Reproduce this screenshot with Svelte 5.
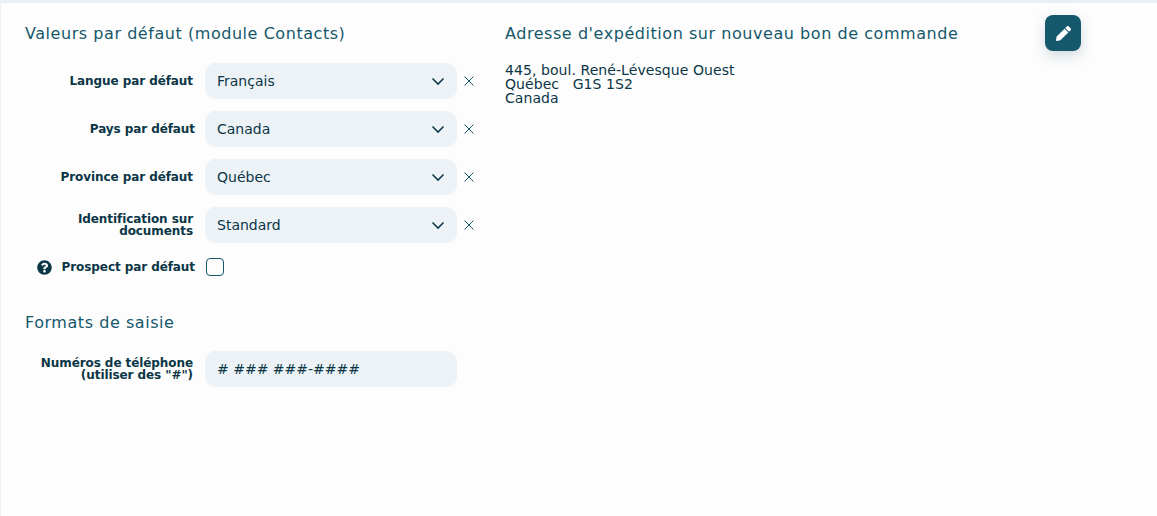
<script>
  const rows = [
    { label: ['Langue par défaut'], value: 'Français', shift: false },
    { label: ['Pays par défaut'], value: 'Canada', shift: true },
    { label: ['Province par défaut'], value: 'Québec', shift: false },
    { label: ['Identification sur', 'documents'], value: 'Standard', shift: false }
  ];
</script>

<div class="page">
  <section class="left">
    <h2>Valeurs par défaut (module Contacts)</h2>
    <div class="rows">
      {#each rows as r}
        <div class="row">
          <div class="label" class:shift={r.shift}>
            {#each r.label as l}<span>{l}</span>{/each}
          </div>
          <div class="select">
            <span>{r.value}</span>
            <svg class="chev" width="14" height="9" viewBox="0 0 14 9"><path d="M1.5 1.5 7 7l5.5-5.500" fill="none" stroke="#0f3d4f" stroke-width="1.6"/></svg>
          </div>
          <svg class="clear" width="12" height="12" viewBox="0 0 12 12"><path d="M1.500 1.500l9 9M10.500 1.500l-9 9" fill="none" stroke="#15586b" stroke-width="1"/></svg>
        </div>
      {/each}
      <div class="row check">
        <div class="label shift">
          <span class="help">
            <svg width="15" height="15" viewBox="0 0 512 512"><path fill="#0b3646" d="M504 256c0 137-111 248-248 248S8 393 8 256 119 8 256 8s248 111 248 248zM262.700 90c-54.500 0-89.300 23-116.500 63.800-3.500 5.300-2.300 12.400 2.800 16.300l34.700 26.300c5.200 3.900 12.600 3 16.700-2.100 17.900-22.700 30.100-35.800 57.300-35.800 20.400 0 45.700 13.100 45.700 33 0 15-12.400 22.700-32.600 34-23.600 13.200-54.800 29.700-54.800 70.900V300c0 6.600 5.400 12 12 12h56c6.600 0 12-5.400 12-12v-1.300c0-28.500 83.400-29.700 83.400-106.900C379.400 133.600 319.100 90 262.700 90zM256 338c-25.400 0-46 20.600-46 46 0 25.400 20.600 46 46 46s46-20.600 46-46c0-25.400-20.600-46-46-46z"/></svg>
          </span>
          <span>Prospect par défaut</span>
        </div>
        <input type="checkbox" class="box" />
      </div>
    </div>

    <h2 class="second">Formats de saisie</h2>
    <div class="row">
      <div class="label"><span>Numéros de téléphone</span><span>(utiliser des "#")</span></div>
      <div class="select phone"><span># ### ###-####</span></div>
    </div>
  </section>

  <section class="right">
    <h2>Adresse d'expédition sur nouveau bon de commande</h2>
    <address>
      <div>445, boul. René-Lévesque Ouest</div>
      <div>Québec &nbsp; G1S 1S2</div>
      <div>Canada</div>
    </address>
    <button class="edit" aria-label="Modifier">
      <svg width="15" height="15" viewBox="0 0 512 512"><path fill="#fff" d="M497.900 142.100l-46.100 46.100c-4.700 4.700-12.300 4.700-17 0l-111-111c-4.700-4.700-4.700-12.300 0-17l46.100-46.100c18.700-18.700 49.100-18.700 67.900 0l60.100 60.100c18.800 18.700 18.800 49.100 0 67.900zM284.200 99.800L21.600 362.400.4 483.900c-2.900 16.400 11.400 30.600 27.800 27.800l121.500-21.300 262.600-262.600c4.700-4.700 4.700-12.300 0-17l-111-111c-4.800-4.700-12.400-4.700-17.100 0z"/></svg>
    </button>
  </section>
</div>

<style>
  :global(body) {
    margin: 0;
    background: #fdfdfd;
  }
  .page {
    height: 513px;
    border-top: 3px solid #eaf0f6;
    border-left: 1px solid #eaf0f6;
    display: flex;
    font-family: "DejaVu Sans", Verdana, sans-serif;
    color: #0b3646;
    overflow: hidden;
  }
  .left {
    width: 480px;
    padding: 21px 0 0 24px;
    box-sizing: border-box;
  }
  .right {
    position: relative;
    width: 600px;
    padding: 21px 0 0 24px;
    box-sizing: border-box;
  }
  h2 {
    margin: 0;
    font-size: 16px;
    line-height: 19px;
    font-weight: 400;
    letter-spacing: 0.55px;
    color: #15586b;
  }
  .rows {
    margin-top: 20px;
    display: flex;
    flex-direction: column;
    gap: 12px;
  }
  .row {
    display: flex;
    align-items: center;
  }
  .row.check {
    height: 24px;
  }
  .label {
    width: 168px;
    flex: none;
    display: flex;
    flex-direction: column;
    align-items: flex-end;
    font-size: 12px;
    line-height: 12px;
    font-weight: 700;
    letter-spacing: -0.08px;
    text-align: right;
  }
  .label.shift {
    width: 170px;
    margin-right: -2px;
  }
  .check .label {
    flex-direction: row;
    justify-content: flex-end;
    align-items: center;
    gap: 10px;
  }
  .help {
    display: flex;
  }
  .select {
    margin-left: 12px;
    width: 252px;
    height: 36px;
    flex: none;
    box-sizing: border-box;
    padding: 0 12px;
    border-radius: 10px;
    background: #edf2f7;
    display: flex;
    align-items: center;
    justify-content: space-between;
    font-size: 14px;
    color: #0b3646;
  }
  .clear {
    margin-left: 6px;
  }
  .box {
    appearance: none;
    margin: 0 0 0 13px;
    width: 18px;
    height: 18px;
    box-sizing: border-box;
    border: 1.5px solid #15586b;
    border-radius: 4px;
    background: #fdfdfd;
  }
  .second {
    margin-top: 34px;
    margin-bottom: 19px;
  }
  address {
    margin-top: 20px;
    font-style: normal;
    font-size: 14px;
    line-height: 14px;
    letter-spacing: 0.07px;
  }
  .edit {
    position: absolute;
    left: 564px;
    top: 12px;
    width: 36px;
    height: 36px;
    padding: 0;
    border: 0;
    border-radius: 8px;
    background: #15586b;
    box-shadow: 0 5px 14px rgba(21, 60, 90, 0.18);
    display: flex;
    align-items: center;
    justify-content: center;
  }
</style>
